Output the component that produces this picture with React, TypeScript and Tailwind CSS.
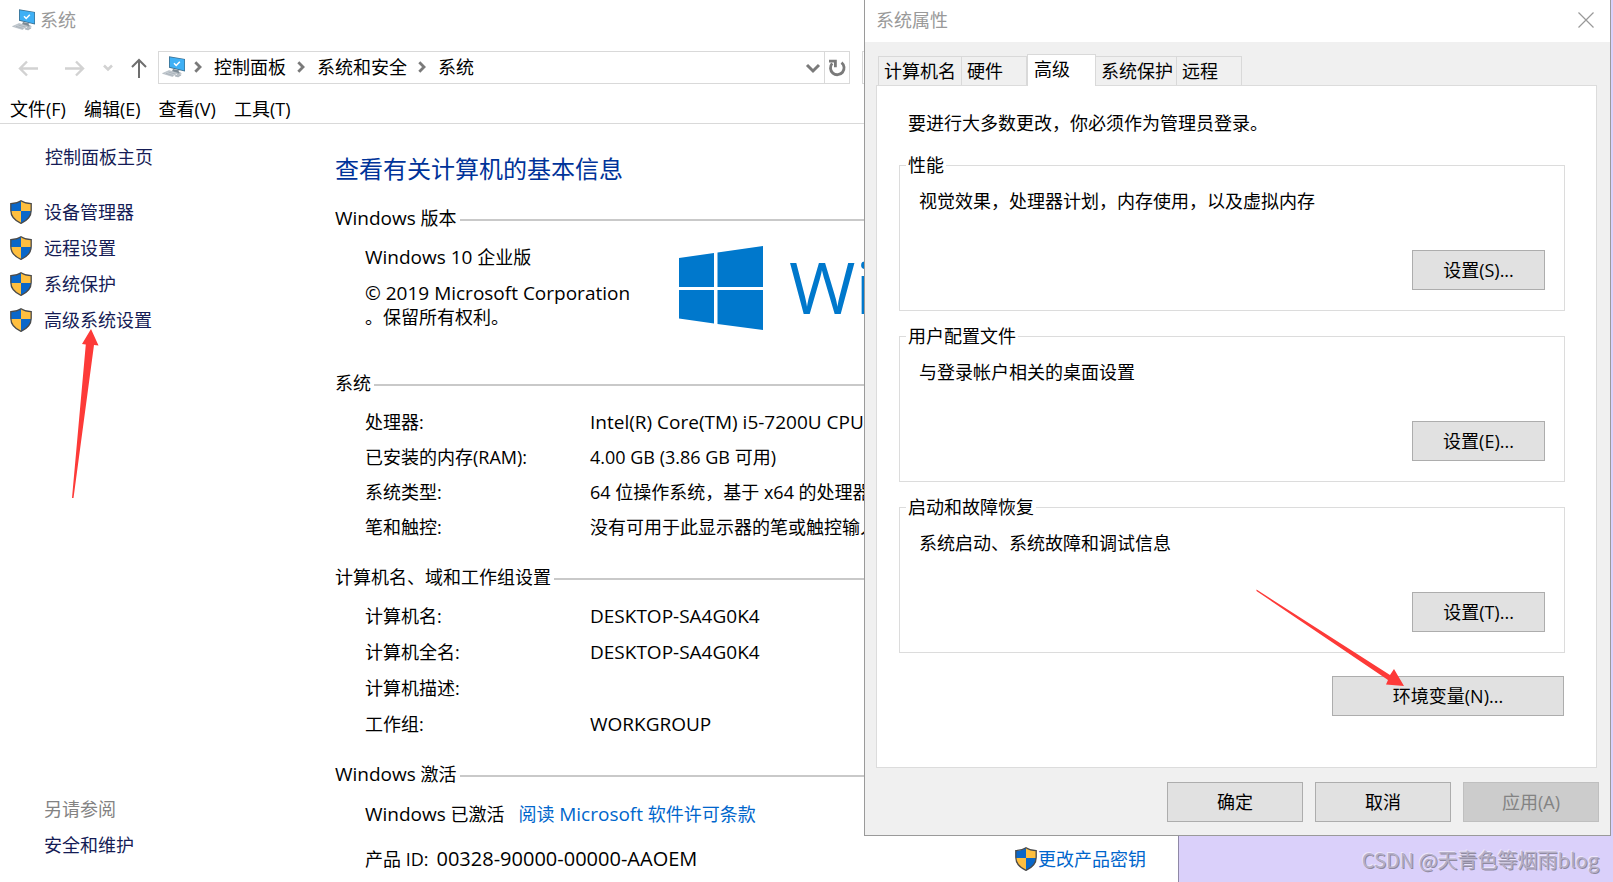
import type { ReactNode } from 'react';

const tasks = ['设备管理器', '远程设置', '系统保护', '高级系统设置'];
const crumbs = ['控制面板', '系统和安全', '系统'];
const menus = ['文件(F)', '编辑(E)', '查看(V)', '工具(T)'];

const systemRows = [
  { label: '处理器:', value: 'Intel(R) Core(TM) i5-7200U CPU', latin: true },
  { label: '已安装的内存(RAM):', value: '4.00 GB (3.86 GB 可用)' },
  { label: '系统类型:', value: '64 位操作系统，基于 x64 的处理器' },
  { label: '笔和触控:', value: '没有可用于此显示器的笔或触控输入' },
];

const nameRows = [
  { label: '计算机名:', value: 'DESKTOP-SA4G0K4', latin: true },
  { label: '计算机全名:', value: 'DESKTOP-SA4G0K4', latin: true },
  { label: '计算机描述:', value: '' },
  { label: '工作组:', value: 'WORKGROUP', latin: true },
];

const tabs = [
  { label: '计算机名', width: 'w-[84px]' },
  { label: '硬件', width: 'w-[65px]' },
  { label: '高级', width: 'w-[69px]', active: true },
  { label: '系统保护', width: 'w-[81px]' },
  { label: '远程', width: 'w-[65px]' },
];

const groups = [
  { title: '性能', text: '视觉效果，处理器计划，内存使用，以及虚拟内存', button: '设置(S)...' },
  { title: '用户配置文件', text: '与登录帐户相关的桌面设置', button: '设置(E)...' },
  { title: '启动和故障恢复', text: '系统启动、系统故障和调试信息', button: '设置(T)...' },
];

function Shield() {
  return (
    <svg className="h-6 w-[22px] shrink-0" viewBox="0 0 22 24" aria-hidden="true">
      <path d="M11 .7C8.200 2.600 4.600 3.600.8 3.600V11h10.200z" fill="#0a67c9" />
      <path d="M11 .7c2.800 1.900 6.400 2.900 10.200 2.900V11H11z" fill="#ffbf3f" />
      <path d="M.8 11c.2 5.500 4 9.700 10.200 12.300V11z" fill="#ffbf3f" />
      <path d="M21.200 11c-.2 5.500-4 9.700-10.200 12.300V11z" fill="#0a67c9" />
      <path
        d="M11 .8C8.200 2.700 4.600 3.700.8 3.700v6.600c0 6 4 10.400 10.200 13 6.200-2.600 10.200-7 10.200-13V3.700C17.400 3.700 13.800 2.700 11 .8z"
        fill="none"
        stroke="#4a4a4a"
        strokeWidth="1.300"
      />
    </svg>
  );
}

function PcIcon() {
  return (
    <svg className="h-[22px] w-6 shrink-0" viewBox="0 0 24 22" aria-hidden="true">
      <path d="M7 .2 23 3v12.600L7 11.800z" fill="#3d6f8f" />
      <path d="M7.800 1.200 22.300 3.600v11L7.800 11.100z" fill="#3fb0f5" />
      <path d="m12 7.300 2.200 2.200 3.600-3.800" fill="none" stroke="#fff" strokeWidth="1.500" />
      <path d="m11 13 6.500 1.600-1 1.500 3.500 1.200-4 .5-6-2.500z" fill="#7d8a94" />
      <path d="m.5 17.400 6.500-2.800 8.500 2.200-5 3.700z" fill="#c5ccd2" stroke="#a3adb5" strokeWidth=".5" />
      <path d="m4 17.400 7 2m-4.500-3.300 7 2" stroke="#98a3ab" strokeWidth=".6" />
      <path d="m13 20 3-1.800 3.200.7-3 2z" fill="#b4bcc3" stroke="#8e99a2" strokeWidth=".5" />
    </svg>
  );
}

function Chevron() {
  return (
    <svg className="h-3 w-2 shrink-0" viewBox="0 0 8 12" fill="none" stroke="#7a7a7a" strokeWidth="2.800" aria-hidden="true">
      <path d="m1.300 1.300 4.700 4.700-4.700 4.700" />
    </svg>
  );
}

// Latin runs sit one pixel larger than the Chinese text around them
function Latin({ children }: { children: ReactNode }) {
  return <span className="text-[19px] leading-6">{children}</span>;
}

function Heading({ children }: { children: ReactNode }) {
  return (
    <h2 className="flex h-6 items-center gap-[3px] whitespace-nowrap">
      <span>{children}</span>
      <span className="mt-1 h-0.5 flex-1 bg-[#c9c9c9]" />
    </h2>
  );
}

interface Row { label: string; value: string; latin?: boolean }

function Rows({ rows, gap }: { rows: Row[]; gap: string }) {
  return (
    <dl className={`flex flex-col pl-[30px] ${gap}`}>
      {rows.map((row) => (
        <div key={row.label} className="flex h-6 whitespace-nowrap">
          <dt className="w-[225px] shrink-0">{row.label}</dt>
          <dd>{row.latin ? <Latin>{row.value}</Latin> : row.value}</dd>
        </div>
      ))}
    </dl>
  );
}

function DialogButton({ children, width, disabled }: { children: ReactNode; width: string; disabled?: boolean }) {
  return (
    <button
      type="button"
      disabled={disabled}
      className={`h-10 border border-[#adadad] bg-[#e1e1e1] disabled:border-[#bfbfbf] disabled:bg-[#cccccc] disabled:text-[#838383] ${width}`}
    >
      {children}
    </button>
  );
}

function Toolbar() {
  return (
    <div className="mt-[11px] flex h-[33px] items-center pr-2.5">
      <button type="button" aria-label="后退" className="ml-[18px] text-[#d2d2d2]">
        <svg className="h-5 w-5" viewBox="0 0 20 20" fill="none" stroke="currentColor" strokeWidth="2.400">
          <path d="M20 10.500H2M9 3.500l-7 7 7 7" />
        </svg>
      </button>
      <button type="button" aria-label="前进" className="ml-[27px] text-[#d2d2d2]">
        <svg className="h-5 w-5" viewBox="0 0 20 20" fill="none" stroke="currentColor" strokeWidth="2.400">
          <path d="M0 10.500h18M11 3.500l7 7-7 7" />
        </svg>
      </button>
      <button type="button" aria-label="最近位置" className="ml-[18px] text-[#d2d2d2]">
        <svg className="h-2.5 w-2.5" viewBox="0 0 10 10" fill="none" stroke="currentColor" strokeWidth="2.600">
          <path d="m1 2.500 4 4 4-4" />
        </svg>
      </button>
      <button type="button" aria-label="向上" className="ml-[18px] text-[#6e6e6e]">
        <svg className="h-5 w-4" viewBox="0 0 16 20" fill="none" stroke="currentColor" strokeWidth="2">
          <path d="M8 20V2M1 9l7-7 7 7" />
        </svg>
      </button>
      <div className="ml-[11px] flex h-full flex-1 border border-[#d9d9d9]">
        <div className="flex flex-1 items-center gap-[11px] pb-px pl-[3px]">
          <PcIcon />
          {crumbs.map((crumb, i) => (
            <div key={crumb} className={`flex items-center gap-3 ${i === 0 ? '-ml-[3px]' : ''}`}>
              <Chevron />
              <button type="button">{crumb}</button>
            </div>
          ))}
        </div>
        <button type="button" aria-label="展开" className="px-[3px] text-[#7a7a7a]">
          <svg className="h-4 w-4" viewBox="0 0 16 16" fill="none" stroke="currentColor" strokeWidth="3">
            <path d="m2 5 6 6 6-6" />
          </svg>
        </button>
        <button type="button" aria-label="刷新" className="border-l border-[#d9d9d9] px-[3px] text-[#7a7a7a]">
          <svg className="h-[18px] w-[18px]" viewBox="0 0 18 18" fill="none" stroke="currentColor" strokeWidth="2.800">
            <path d="M13.500 3.600a6.800 6.800 0 1 1-9.300.8" />
            <path d="M1 2.200h6.400v6" />
          </svg>
        </button>
      </div>
      <input type="search" aria-label="搜索控制面板" className="ml-3 h-full w-[306px] border border-[#d9d9d9]" />
    </div>
  );
}

function SystemWindow() {
  return (
    <main className="mr-[434px] flex min-h-screen flex-col overflow-hidden border-r border-[#8f88a6] bg-white">
      <header className="flex h-10 items-center gap-1 pl-3 text-[#999999]">
        <PcIcon />
        <h1>系统</h1>
      </header>
      <Toolbar />
      <nav className="mt-[13px] flex gap-[18px] border-b border-[#d9d9d9] pb-0.5 pl-2.5">
        {menus.map((menu) => (
          <button key={menu} type="button">{menu}</button>
        ))}
      </nav>

      <div className="flex flex-1">
        <aside className="flex w-[335px] shrink-0 flex-col pt-[21px] pb-[25px] text-[#151c55]">
          <a href="#home" className="ml-[45px]">控制面板主页</a>
          <ul className="mt-[31px] flex flex-col gap-3">
            {tasks.map((task, i) => (
              <li key={task} className="relative flex gap-3 pl-2.5">
                <Shield />
                <a href={`#task-${i}`}>{task}</a>
                {i === 3 && (
                  <svg className="absolute top-5 left-[70px] h-[172px] w-8" viewBox="0 0 32 172" aria-hidden="true">
                    <path d="M21 1 28.500 17.500 24 17 3.500 170H2L15.800 16.500 12 16z" fill="#fd3a38" />
                  </svg>
                )}
              </li>
            ))}
          </ul>
          <p className="mt-auto ml-11 text-[#838383]">另请参阅</p>
          <a href="#security" className="mt-3 ml-11">安全和维护</a>
        </aside>

        <section className="min-w-0 flex-1 pt-[29px]">
          <p className="text-2xl leading-8 text-[#003399]">查看有关计算机的基本信息</p>
          <div className="mt-[21px] mb-[15px]">
            <Heading><Latin>Windows</Latin> 版本</Heading>
          </div>
          <div className="flex h-[84px] pl-[30px] whitespace-nowrap">
            <div className="w-[314px] shrink-0">
              <p className="h-6"><Latin>Windows 10</Latin> 企业版</p>
              <p className="mt-3">
                <Latin>© 2019 Microsoft Corporation</Latin>
                <br />
                。保留所有权利。
              </p>
            </div>
            <div className="flex items-start gap-[26px] pt-px text-[#0078cc]">
              <svg className="h-[84px] w-[84px] shrink-0" viewBox="0 0 84 84" fill="currentColor" aria-hidden="true">
                <path d="M0 12 35 7v34H0zM38.500 6.500 84 0v41H38.500zM0 44h35v33.500L0 72.500zM38.500 44H84v40l-45.500-6z" />
              </svg>
              <span className="text-7xl leading-[80px]">Windows</span>
            </div>
          </div>

          <div className="mt-[42px] mb-[15px]">
            <Heading>系统</Heading>
          </div>
          <Rows rows={systemRows} gap="gap-[11px]" />

          <div className="mt-[26px] mb-[15px]">
            <Heading>计算机名、域和工作组设置</Heading>
          </div>
          <Rows rows={nameRows} gap="gap-3" />

          <div className="mt-[26px] mb-4">
            <Heading><Latin>Windows</Latin> 激活</Heading>
          </div>
          <div className="flex h-6 gap-3.5 pl-[30px]">
            <span><Latin>Windows</Latin> 已激活</span>
            <a href="#license" className="text-[#0066cc]">阅读 <Latin>Microsoft</Latin> 软件许可条款</a>
          </div>
          <div className="mt-[21px] flex h-6 justify-between pr-8 pl-[30px]">
            <p className="flex items-baseline gap-2">
              产品 ID:
              <span className="text-xl leading-6">00328-90000-00000-AAOEM</span>
            </p>
            <a href="#product-key" className="flex gap-px text-[#0066cc]">
              <Shield />
              更改产品密钥
            </a>
          </div>
        </section>
      </div>
    </main>
  );
}

function PropertiesDialog() {
  return (
    <div
      role="dialog"
      aria-label="系统属性"
      className="absolute top-0 right-0.5 w-[747px] border-x border-b border-[#9a9a9a] bg-[#f0f0f0]"
    >
      <header className="flex h-[42px] items-center justify-between bg-white pr-4 pb-[3px] pl-[11px] text-[#999999]">
        <h2>系统属性</h2>
        <button type="button" aria-label="关闭">
          <svg className="h-4 w-4" viewBox="0 0 16 16" stroke="currentColor" strokeWidth="1.200">
            <path d="m.5.5 15 15m0-15-15 15" />
          </svg>
        </button>
      </header>

      <div role="tablist" className="mt-3 ml-[13px] flex items-end">
        {tabs.map((tab) =>
          tab.active ? (
            <button
              key={tab.label}
              type="button"
              role="tab"
              aria-selected="true"
              className={`z-10 -mb-px h-8 border-x border-t border-[#d9d9d9] bg-white pb-1 pl-1.5 text-left ${tab.width}`}
            >
              {tab.label}
            </button>
          ) : (
            <button
              key={tab.label}
              type="button"
              role="tab"
              aria-selected="false"
              className={`h-[29px] border-t border-r border-[#d9d9d9] pl-[5px] text-left whitespace-nowrap first:border-l ${tab.width}`}
            >
              {tab.label}
            </button>
          )
        )}
      </div>

      <div role="tabpanel" className="mr-[13px] ml-[11px] border border-[#dcdcdc] bg-white pt-[25px] pr-[31px] pb-[51px] pl-[22px]">
        <p className="pl-[9px]">要进行大多数更改，你必须作为管理员登录。</p>
        <div className="mt-[18px] flex flex-col gap-[13px]">
          {groups.map((group) => (
            <fieldset key={group.title} className="border border-[#dcdcdc] pr-[19px] pb-5">
              <legend className="ml-1.5 px-0.5">{group.title}</legend>
              <p className="pt-3 pl-[19px]">{group.text}</p>
              <div className="mt-[37px] flex justify-end">
                <DialogButton width="w-[133px]">{group.button}</DialogButton>
              </div>
            </fieldset>
          ))}
        </div>
        <div className="mt-[23px] flex justify-end pr-px">
          <div className="relative flex">
            <DialogButton width="w-[232px]">环境变量(N)...</DialogButton>
            <svg className="pointer-events-none absolute -top-[87px] -left-[76px] h-[100px] w-[152px]" viewBox="0 0 152 100" aria-hidden="true">
              <path d="M.5.5 134 86 138 80 148 97 130 95.500 132 91 .5 2z" fill="#fd3a38" />
            </svg>
          </div>
        </div>
      </div>

      <footer className="flex justify-end gap-3 pt-3.5 pr-[11px] pb-[13px]">
        <DialogButton width="w-[136px]">确定</DialogButton>
        <DialogButton width="w-[136px]">取消</DialogButton>
        <DialogButton width="w-[136px]" disabled>应用(A)</DialogButton>
      </footer>
    </div>
  );
}

export default function App() {
  return (
    <div className="relative min-h-screen overflow-hidden bg-[#dad0fa] font-['Open_Sans','Noto_Sans_CJK_SC',sans-serif] text-lg leading-6 text-black">
      <SystemWindow />
      <PropertiesDialog />
      <p className="absolute right-3.5 bottom-2.5 font-['Noto_Sans_CJK_SC',sans-serif] text-xl leading-6 text-[#b5afc6] [text-shadow:1px_1px_0_#8f8aa0,-1px_-1px_0_#ece6fc]">
        CSDN @天青色等烟雨blog
      </p>
    </div>
  );
}
